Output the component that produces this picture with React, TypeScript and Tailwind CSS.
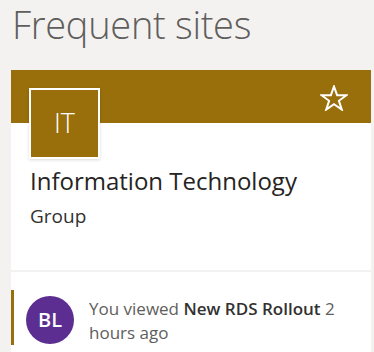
export default function App() {
  return (
    <div className="h-[352px] w-[374px] overflow-hidden bg-[#f3f2f1] font-['Open_Sans',sans-serif]">
      <h1 className="-mt-[3px] pl-[12px] text-[38px] font-light leading-[54px] tracking-[-0.3px] text-[#605e5c]">Frequent sites</h1>

      <div className="ml-[11px] mt-[19px] w-[360px]">
        <div className="relative bg-white pb-[41px]">
          <div className="flex h-[53px] justify-end bg-[#986f0b] pr-[23px] pt-[15px]">
            <svg width="28" height="26" viewBox="0 0 28 26" fill="none" stroke="white" strokeWidth="2" strokeLinejoin="miter">
              <polygon points="14,1.5 17.1,10.2 26.5,10.2 18.9,15.8 21.8,24.6 14,19.2 6.2,24.6 9.1,15.8 1.5,10.2 10.9,10.2" />
            </svg>
          </div>
          <div className="absolute left-[18px] top-[18px] flex h-[71px] w-[71px] items-center justify-center border-2 border-white bg-[#986f0b] shadow-[0_1px_3px_rgba(0,0,0,0.15)]">
            <span className="text-[27px] font-light text-white">IT</span>
          </div>
          <div className="pl-[19px] pt-[42px]">
            <p className="text-[24px] leading-[32px] text-[#252423]">Information Technology</p>
            <p className="mt-[6px] text-[19px] leading-[26px] text-[#323130]">Group</p>
          </div>
        </div>

        <div className="mt-[2px] bg-white pb-[10px] pt-[18px]">
          <div className="flex items-start border-l-[3px] border-[#986f0b] pl-[12px] pt-[6px]">
            <div className="flex h-[48px] w-[48px] shrink-0 items-center justify-center rounded-full bg-[#5c2e91] text-[20px] font-semibold text-white">
              BL
            </div>
            <p className="ml-[15px] mt-[1px] text-[17px] leading-[24px] text-[#605e5c]">
              You viewed <span className="font-semibold text-[#323130]">New RDS Rollout</span> 2 hours ago
            </p>
          </div>
        </div>
      </div>
    </div>
  );
}
